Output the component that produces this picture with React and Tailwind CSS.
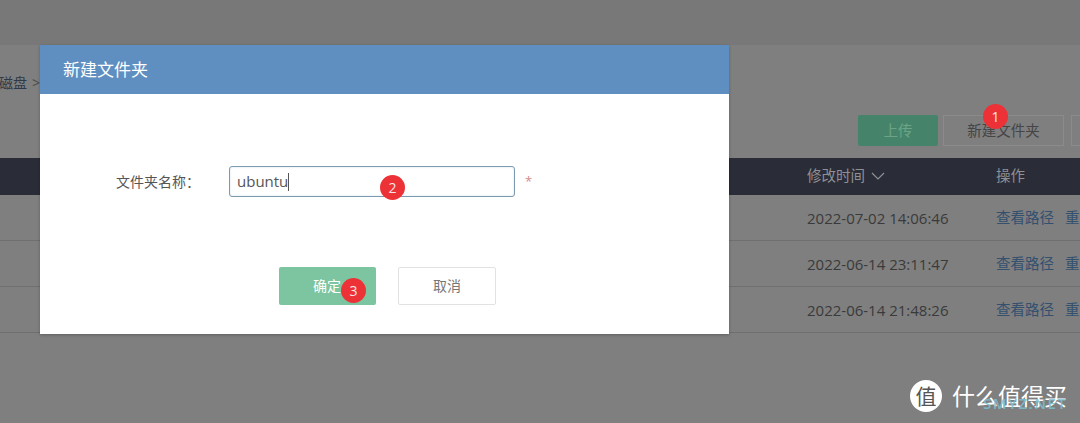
import React from "react";

const font = { fontFamily: '"Open Sans","Noto Sans CJK SC",sans-serif' };

function Badge({ n, className }) {
  return (
    <div className={"absolute w-[25px] h-[25px] rounded-full bg-[#ec3237] text-[#fbe4e0] text-[14px] leading-[25px] text-center " + className}>
      {n}
    </div>
  );
}

function Row({ time }) {
  return (
    <div className="h-[46px] border-b border-[#6f6f6f] flex items-center pl-[807px] pt-[1px] whitespace-nowrap">
      <span className="w-[189px] shrink-0 text-[15px] text-[#3a3a3a]">{time}</span>
      <span className="text-[14.5px] text-[#33506f] mr-[11px]">查看路径</span>
      <span className="text-[14.5px] text-[#33506f]">重命名</span>
    </div>
  );
}

export default function App() {
  return (
    <div className="relative w-[1080px] h-[423px] overflow-hidden bg-[#7f7f7f]" style={font}>
      <div className="h-[45px] bg-[#787878]" />
      <div className="h-[70px] flex items-start pt-[28px] pl-0 -ml-[1px]">
        <span className="text-[14px] leading-[20px] text-[#2f3a48]">磁盘</span>
        <span className="text-[14px] leading-[20px] text-[#4a4a4a] ml-[5px]">&gt;</span>
      </div>
      <div className="h-[43px] flex items-start pl-[858px] gap-[5px] whitespace-nowrap">
        <div className="w-[80px] h-[31px] shrink-0 rounded-[2px] bg-[#45846a] text-[#6da487] text-[14.5px] leading-[31px] text-center">上传</div>
        <div className="w-[121px] h-[31px] shrink-0 border border-[#8b8b8b] text-[#454545] text-[14.5px] leading-[29px] text-center">新建文件夹</div>
        <div className="w-[60px] h-[31px] shrink-0 ml-[2px] border border-[#8b8b8b]" />
      </div>
      <div className="h-[37px] bg-[#2a2c38] flex items-center pl-[807px] pb-[2px] text-[14.5px] text-[#8f9094] whitespace-nowrap">
        <span className="w-[189px] shrink-0 flex items-center gap-[6px]">
          修改时间
          <svg width="14" height="8" viewBox="0 0 14 8" fill="none" stroke="#8f9094" strokeWidth="1.2"><path d="M1 1l6 6 6-6" /></svg>
        </span>
        <span>操作</span>
      </div>
      <Row time="2022-07-02 14:06:46" />
      <Row time="2022-06-14 23:11:47" />
      <Row time="2022-06-14 21:48:26" />

      <div className="absolute left-[40px] top-[45px] w-[689px] h-[289px] bg-white flex flex-col shadow-[0_1px_3px_rgba(0,0,0,0.25)]">
        <div className="h-[49px] shrink-0 bg-[#5f8fc1] flex items-center pl-[23px] text-[17px] text-white">新建文件夹</div>
        <div className="flex items-center mt-[72px] h-[31px]">
          <span className="w-[189px] shrink-0 pl-[76px] text-[14px] text-[#555555]">文件夹名称：</span>
          <div className="w-[286px] h-[31px] shrink-0 rounded-[3px] border border-[#7d9bb0] pl-[7px] flex items-center text-[15px] text-[#555555] shadow-[inset_0_0_2px_rgba(90,140,180,0.3)]">
            ubuntu<span className="w-px h-[18px] bg-[#555555]" />
          </div>
          <span className="ml-[10px] text-[13px] text-[#dc8a8a]">*</span>
        </div>
        <div className="flex items-start mt-[70px] pl-[239px] gap-[22px]">
          <div className="w-[97px] h-[38px] pr-[1px] rounded-[2px] bg-[#7cc5a0] text-white text-[14px] leading-[38px] text-center">确定</div>
          <div className="w-[98px] h-[38px] rounded-[2px] border border-[#e2e2e2] text-[#777777] text-[14px] leading-[36px] text-center">取消</div>
        </div>
      </div>

      <Badge n="1" className="left-[983px] top-[104px]" />
      <Badge n="2" className="left-[380px] top-[175px]" />
      <Badge n="3" className="left-[341px] top-[278px]" />

      <div className="absolute left-[910px] top-[380px] w-[32px] h-[32px] rounded-full bg-white text-[#555555] text-[21px] leading-[32px] text-center">值</div>
      <div className="absolute left-[952px] top-[381px] text-[23px] leading-[30px] text-white whitespace-nowrap">什么值得买</div>
      <div className="absolute left-[983px] top-[394px] text-[15px] leading-[18px] font-semibold tracking-[1.5px] text-[#7cc0d2]/85 whitespace-nowrap">SMYZ.NET</div>
    </div>
  );
}
